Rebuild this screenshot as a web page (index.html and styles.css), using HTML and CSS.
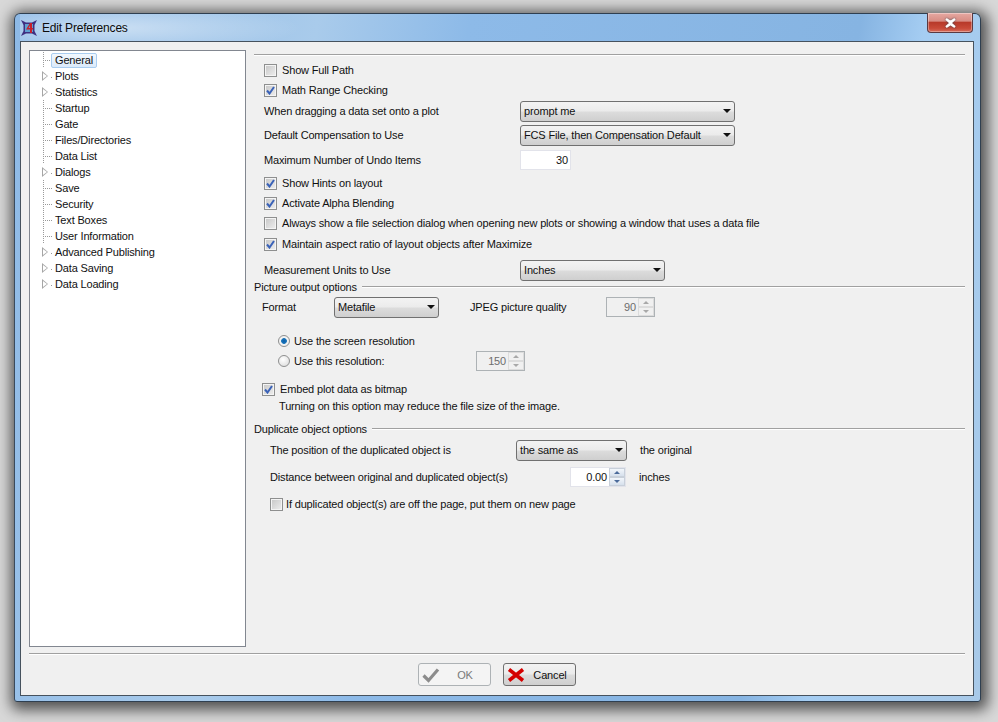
FILE: index.html
```html
<!DOCTYPE html>
<html lang="en">
<head>
<meta charset="utf-8">
<title>Edit Preferences</title>
<link rel="stylesheet" href="styles.css">
</head>
<body>
<div class="window">
  <header class="titlebar">
    <svg class="appicon" width="16" height="16" viewBox="0 0 16 16">
      <path d="M0 0L5 2.500H11L16 0L13.500 5V11L16 16L11 13.500H5L0 16L2.500 11V5Z" fill="#3f2f80"/>
      <rect x="4" y="4" width="8" height="8" fill="#5f9fd0"/>
      <path d="M9 3L5 9.500H9V13H11V9.500H12V8H11V3ZM9 5.500V8H7.500Z" fill="#c8202a"/>
    </svg>
    <span class="title">Edit Preferences</span>
    <div class="close"><span class="closex">
      <svg width="13" height="10" viewBox="0 0 13 10"><path d="M2 1L6.500 4 11 1M2 9L6.500 6 11 9M2 1L11 9M11 1L2 9" fill="none" stroke="#fff" stroke-width="2.200"/></svg>
    </span></div>
  </header>
  <div class="client">
    <div class="main">
      <ul class="tree">
        <li class="node"><span class="guide first"></span><span class="sel">General</span></li>
        <li class="node"><span class="twisty"></span><span class="lab">Plots</span></li>
        <li class="node"><span class="twisty"></span><span class="lab">Statistics</span></li>
        <li class="node"><span class="guide"></span><span class="lab">Startup</span></li>
        <li class="node"><span class="guide"></span><span class="lab">Gate</span></li>
        <li class="node"><span class="guide"></span><span class="lab">Files/Directories</span></li>
        <li class="node"><span class="guide"></span><span class="lab">Data List</span></li>
        <li class="node"><span class="twisty"></span><span class="lab">Dialogs</span></li>
        <li class="node"><span class="guide"></span><span class="lab">Save</span></li>
        <li class="node"><span class="guide"></span><span class="lab">Security</span></li>
        <li class="node"><span class="guide"></span><span class="lab">Text Boxes</span></li>
        <li class="node"><span class="guide"></span><span class="lab">User Information</span></li>
        <li class="node"><span class="twisty"></span><span class="lab">Advanced Publishing</span></li>
        <li class="node"><span class="twisty"></span><span class="lab">Data Saving</span></li>
        <li class="node"><span class="twisty"></span><span class="lab">Data Loading</span></li>
      </ul>
      <div class="prefs">
        <hr class="rule top">
        <section class="general">
          <label class="row"><span class="cb"></span>Show Full Path</label>
          <label class="row"><span class="cb on"><svg width="9" height="9" viewBox="0 0 9 9"><path d="M1 4.500L3.500 7.500L8 1" fill="none" stroke="#3a62b8" stroke-width="2"/></svg></span>Math Range Checking</label>
          <div class="row plain m1"><span class="fieldlabel">When dragging a data set onto a plot</span><span class="combo wide">prompt me<i class="arrow"></i></span></div>
          <div class="row plain m4"><span class="fieldlabel">Default Compensation to Use</span><span class="combo wide">FCS File, then Compensation Default<i class="arrow"></i></span></div>
          <div class="row plain m5"><span class="fieldlabel">Maximum Number of Undo Items</span><span class="edit undo">30</span></div>
          <label class="row m3"><span class="cb on"><svg width="9" height="9" viewBox="0 0 9 9"><path d="M1 4.500L3.500 7.500L8 1" fill="none" stroke="#3a62b8" stroke-width="2"/></svg></span>Show Hints on layout</label>
          <label class="row"><span class="cb on"><svg width="9" height="9" viewBox="0 0 9 9"><path d="M1 4.500L3.500 7.500L8 1" fill="none" stroke="#3a62b8" stroke-width="2"/></svg></span>Activate Alpha Blending</label>
          <label class="row"><span class="cb"></span>Always show a file selection dialog when opening new plots or showing a window that uses a data file</label>
          <label class="row m1"><span class="cb on"><svg width="9" height="9" viewBox="0 0 9 9"><path d="M1 4.500L3.500 7.500L8 1" fill="none" stroke="#3a62b8" stroke-width="2"/></svg></span>Maintain aspect ratio of layout objects after Maximize</label>
          <div class="row plain m6"><span class="fieldlabel">Measurement Units to Use</span><span class="combo units">Inches<i class="arrow"></i></span></div>
        </section>
        <section class="picture">
          <h2 class="legend">Picture output options</h2>
          <div class="row format"><span class="fmtlabel">Format</span><span class="combo fmt">Metafile<i class="arrow"></i></span><span class="jpeg">JPEG picture quality</span><span class="edit spin off q"><b>90</b><i class="spinner"><u class="up"></u><u class="dn"></u></i></span></div>
          <div class="row radio m14"><span class="rd on"></span>Use the screen resolution</div>
          <div class="row radio"><span class="rd"></span><span class="reslabel">Use this resolution:</span><span class="edit spin off res"><b>150</b><i class="spinner"><u class="up"></u><u class="dn"></u></i></span></div>
          <label class="row embed m8"><span class="cb on"><svg width="9" height="9" viewBox="0 0 9 9"><path d="M1 4.500L3.500 7.500L8 1" fill="none" stroke="#3a62b8" stroke-width="2"/></svg></span>Embed plot data as bitmap</label>
          <p class="hint">Turning on this option may reduce the file size of the image.</p>
        </section>
        <section class="duplicate">
          <h2 class="legend">Duplicate object options</h2>
          <div class="row dup m4"><span class="poslabel">The position of the duplicated object is</span><span class="combo same">the same as<i class="arrow"></i></span><span class="after">the original</span></div>
          <div class="row dup m7"><span class="distlabel">Distance between original and duplicated object(s)</span><span class="edit spin dist"><b>0.00</b><i class="spinner live"><u class="up"></u><u class="dn"></u></i></span><span class="after">inches</span></div>
          <label class="row dup m7"><span class="cb tight"></span>If duplicated object(s) are off the page, put them on new page</label>
        </section>
      </div>
    </div>
    <hr class="rule foot">
    <footer class="buttons">
      <button class="btn off" disabled><svg width="18" height="16" viewBox="0 0 18 16"><path d="M1.500 8.500L6.500 13.500L16 2.500" fill="none" stroke="#8c8c8c" stroke-width="3.200"/></svg><span>OK</span></button>
      <button class="btn"><svg width="18" height="14" viewBox="0 0 18 14"><path d="M2 1.500L16 12.500M16 1.500L2 12.500" fill="none" stroke="#d40000" stroke-width="3.600"/></svg><span>Cancel</span></button>
    </footer>
  </div>
</div>
</body>
</html>
```
FILE: styles.css
```css
* { box-sizing: border-box; }
html, body { height: 100%; }
body {
  margin: 0;
  padding: 13px 17px 20px 14px;
  background: #d8d8d8;
  font: 11px/14px "Liberation Sans", Arial, sans-serif;
  letter-spacing: -.16px;
  color: #111;
  overflow: hidden;
}
.window {
  width: 967px;
  height: 689px;
  padding: 0 6px 5px 5px;
  border-radius: 6px 6px 3px 3px;
  border: 1px solid #2f3f50;
  border-left-color: #3a4a5c;
  background: linear-gradient(100deg, #8db9e6 0, #a9cbeb 28%, #8dbae8 42%, #86b4e2 78%, #a5cdf2 84%, #a8c9e8 100%);
  box-shadow: 2px 3px 14px 5px rgba(0,0,0,.62);
  display: flex;
  flex-direction: column;
}
.titlebar {
  height: 27px;
  display: flex;
  align-items: center;
  flex: none;
  position: relative;
  background: radial-gradient(ellipse 190px 26px at 90px 14px, rgba(255,255,255,.5), rgba(255,255,255,0));
}
.appicon { margin: 0 5px 0 1px; flex: none; }
.title { font-size: 12px; letter-spacing: -.19px; color: #0c0c0c; }
.close {
  position: absolute;
  right: 1px;
  top: -1px;
  width: 46px;
  height: 20px;
  border: 1px solid #5a3a42;
  border-top: 0;
  border-radius: 0 0 4px 4px;
  background: linear-gradient(#e6a9a2 0, #d88d84 42%, #b83a2a 50%, #c84a38 80%, #d66c5c 100%);
  box-shadow: inset 0 0 0 1px rgba(255,255,255,.35);
  display: flex;
  align-items: center;
  justify-content: center;
}
.closex { display: flex; filter: drop-shadow(0 0 1px #4a4a55); }
.client {
  flex: 1;
  min-height: 0;
  background: #f0f0f0;
  border: 1px solid #46525e;
  padding: 8px;
  display: flex;
  flex-direction: column;
}
.main { display: flex; height: 597px; flex: none; }
.tree {
  width: 217px;
  flex: none;
  margin: 0;
  padding: 1px 0 0;
  list-style: none;
  background: #fff;
  border: 1px solid #828790;
}
.node { height: 16px; display: flex; align-items: center; padding-left: 10px; }
.twisty {
  width: 0; height: 0; flex: none;
  position: relative;
  margin: 0 3px 0 2px;
  border-left: 6px solid #a6a6a6;
  border-top: 5px solid transparent;
  border-bottom: 5px solid transparent;
}
.twisty::after {
  content: "";
  position: absolute;
  left: -5px;
  top: -3px;
  border-left: 4px solid #fff;
  border-top: 3px solid transparent;
  border-bottom: 3px solid transparent;
}
.guide {
  width: 9px; height: 16px; flex: none;
  margin-left: 3px;
  background-image: linear-gradient(#9a9a9a 50%, transparent 50%), linear-gradient(90deg, #9a9a9a 50%, transparent 50%);
  background-size: 1px 2px, 2px 1px;
  background-repeat: repeat-y, repeat-x;
  background-position: 0 0, 0 8px;
}
.guide.first { background-position: 0 8px, 0 8px; }
.lab { margin-left: 3px; white-space: nowrap; }
.twisty + .lab {
  margin-left: 0;
  padding-left: 4px;
  background: linear-gradient(#9a9a9a, #9a9a9a) 0 8px / 1px 1px no-repeat;
}
.sel {
  margin-left: -1px;
  padding: 0 3px;
  height: 15px;
  line-height: 13px;
  border: 1px solid #a9cdf0;
  border-radius: 2px;
  background: linear-gradient(#f2f8fe, #dbeafa);
}
.prefs { width: 711px; margin-left: 8px; flex: none; }
.rule { margin: 0; border: 0; height: 2px; background: linear-gradient(#a0a0a0 50%, #fff 50%); }
.rule.top { margin-top: 4px; width: 711px; }
.rule.foot { width: 936px; margin-top: 6px; flex: none; }
.general { padding: 4px 0 0 10px; }
.row { display: flex; align-items: center; height: 20px; white-space: nowrap; }
.m1 { margin-top: 1px; }
.m3 { margin-top: 3px; }
.m4 { margin-top: 4px; }
.m5 { margin-top: 5px; }
.m6 { margin-top: 6px; }
.m7 { margin-top: 7px; }
.m8 { margin-top: 8px; }
.m14 { margin-top: 14px; }
.cb {
  width: 13px; height: 13px; flex: none;
  margin-right: 5px;
  border: 1px solid #8e8f8f;
  background: linear-gradient(135deg, #c6c6c6, #efefef);
  box-shadow: inset 0 0 0 1px #f4f4f4;
  display: flex; align-items: center; justify-content: center;
}
.cb.tight { margin-right: 3px; }
.fieldlabel { width: 256px; flex: none; }
.combo {
  height: 21px;
  display: flex;
  align-items: center;
  justify-content: space-between;
  padding: 0 3px 0 3px;
  border: 1px solid #707070;
  border-radius: 3px;
  flex: none;
  background: linear-gradient(#f3f3f3 0, #ebebeb 48%, #dcdcdc 52%, #cfcfcf 100%);
}
.combo.wide { width: 215px; }
.combo.units { width: 145px; }
.combo.fmt { width: 105px; }
.combo.same { width: 111px; }
.arrow { width: 0; height: 0; border-left: 4px solid transparent; border-right: 4px solid transparent; border-top: 4px solid #111; }
.edit {
  height: 20px;
  background: #fff;
  border: 1px solid #e2e3ea;
  display: flex;
  align-items: center;
  justify-content: flex-end;
  flex: none;
}
.edit.undo { width: 51px; padding-right: 2px; }
.spin b { font-weight: 400; margin-right: 2px; }
.spin.off { background: #f0f0f0; border-color: #adb2b5; color: #6d6d6d; }
.spinner { width: 16px; height: 18px; display: flex; flex-direction: column; flex: none; }
.spinner u { flex: 1; display: flex; align-items: center; justify-content: center; border: 1px solid #dcdcdc; background: #f0f0f0; }
.spinner.live u { background: linear-gradient(#f2f6fb, #d6e0ec); border-color: #c8d0da; }
.spinner u::after { content: ""; width: 0; height: 0; border-left: 3px solid transparent; border-right: 3px solid transparent; }
.up::after { border-bottom: 3px solid #a8a8a8; }
.dn::after { border-top: 3px solid #a8a8a8; }
.live .up::after { border-bottom-color: #4a6a9a; }
.live .dn::after { border-top-color: #4a6a9a; }
.legend {
  margin: 0;
  font: inherit;
  height: 14px;
  display: flex;
  align-items: center;
  gap: 5px;
}
.legend::after { content: ""; flex: 1; height: 2px; background: linear-gradient(#a0a0a0 50%, #fff 50%); }
.format { padding-left: 8px; margin-top: 3px; }
.fmtlabel { width: 72px; flex: none; }
.jpeg { margin-left: 31px; width: 136px; flex: none; }
.q { width: 49px; }
.res { width: 49px; }
.radio { padding-left: 24px; }
.rd {
  width: 12px; height: 12px; flex: none;
  margin-right: 4px;
  border-radius: 50%;
  border: 1px solid #8e8f8f;
  background: radial-gradient(circle at 40% 35%, #fff, #d8d8d8);
}
.rd.on { background: radial-gradient(circle, #0a5ea8 0, #1b75bb 2.500px, #f2f2f2 3.200px); }
.reslabel { width: 182px; flex: none; }
.embed { padding-left: 8px; }
.hint { margin: 0; padding-left: 25px; height: 14px; }
.duplicate { margin-top: 9px; }
.dup { padding-left: 16px; }
.poslabel { width: 246px; flex: none; }
.after { margin-left: 13px; }
.distlabel { width: 300px; flex: none; }
.dist { width: 56px; }
.buttons { display: flex; gap: 12px; justify-content: center; padding: 8px 0 0; flex: none; }
.btn {
  width: 73px; height: 23px;
  padding: 0 6px 0 3px;
  display: flex; align-items: center;
  font: inherit;
  letter-spacing: inherit;
  color: #111;
  border: 1px solid #707070;
  border-radius: 3px;
  background: linear-gradient(#f3f3f3 0, #ebebeb 48%, #dcdcdc 52%, #cfcfcf 100%);
}
.btn span { flex: 1; text-align: center; padding-left: 6px; }
.btn.off { background: #f4f4f4; border-color: #adb2b5; color: #7a7a7a; }
```
